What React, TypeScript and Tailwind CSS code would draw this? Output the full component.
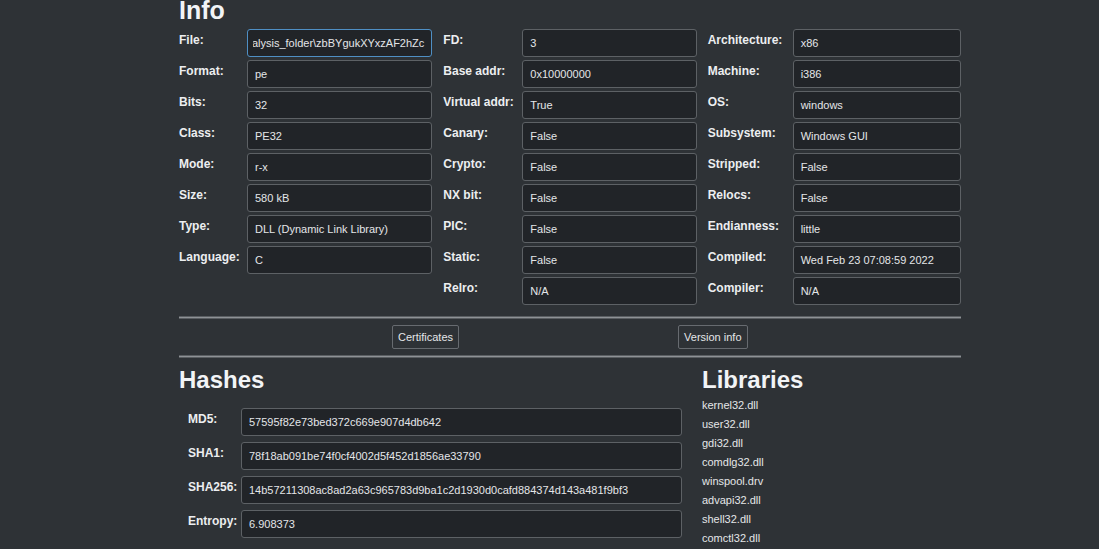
import React from 'react';

type Field = { label: string; value: string; focused?: boolean; scroll?: boolean };

const col1: Field[] = [
  { label: 'File:', value: 'C:\\Users\\user\\Desktop\\analysis_folder\\zbBYgukXYxzAF2hZc', focused: true, scroll: true },
  { label: 'Format:', value: 'pe' },
  { label: 'Bits:', value: '32' },
  { label: 'Class:', value: 'PE32' },
  { label: 'Mode:', value: 'r-x' },
  { label: 'Size:', value: '580 kB' },
  { label: 'Type:', value: 'DLL (Dynamic Link Library)' },
  { label: 'Language:', value: 'C' },
];

const col2: Field[] = [
  { label: 'FD:', value: '3' },
  { label: 'Base addr:', value: '0x10000000' },
  { label: 'Virtual addr:', value: 'True' },
  { label: 'Canary:', value: 'False' },
  { label: 'Crypto:', value: 'False' },
  { label: 'NX bit:', value: 'False' },
  { label: 'PIC:', value: 'False' },
  { label: 'Static:', value: 'False' },
  { label: 'Relro:', value: 'N/A' },
];

const col3: Field[] = [
  { label: 'Architecture:', value: 'x86' },
  { label: 'Machine:', value: 'i386' },
  { label: 'OS:', value: 'windows' },
  { label: 'Subsystem:', value: 'Windows GUI' },
  { label: 'Stripped:', value: 'False' },
  { label: 'Relocs:', value: 'False' },
  { label: 'Endianness:', value: 'little' },
  { label: 'Compiled:', value: 'Wed Feb 23 07:08:59 2022' },
  { label: 'Compiler:', value: 'N/A' },
];

const hashes: Field[] = [
  { label: 'MD5:', value: '57595f82e73bed372c669e907d4db642' },
  { label: 'SHA1:', value: '78f18ab091be74f0cf4002d5f452d1856ae33790' },
  { label: 'SHA256:', value: '14b57211308ac8ad2a63c965783d9ba1c2d1930d0cafd884374d143a481f9bf3' },
  { label: 'Entropy:', value: '6.908373' },
];

const libraries = [
  'kernel32.dll',
  'user32.dll',
  'gdi32.dll',
  'comdlg32.dll',
  'winspool.drv',
  'advapi32.dll',
  'shell32.dll',
  'comctl32.dll',
];

const ValueBox: React.FC<{ field: Field; className: string }> = ({ field, className }) => (
  <div
    className={`h-[28px] min-w-0 overflow-hidden rounded-[3px] border bg-[#212428] flex items-center text-[11px] text-[#e4e6e8] ${
      field.focused ? 'border-[#4f8fc4]' : 'border-[#5d6165]'
    } ${className}`}
  >
    {field.scroll ? (
      <div className="flex-1 min-w-0 mx-[5px] overflow-hidden flex justify-end whitespace-nowrap pr-[2px]">
        <span className="shrink-0">{field.value}</span>
      </div>
    ) : (
      <span className="pl-[7px] whitespace-nowrap">{field.value}</span>
    )}
  </div>
);

const InfoColumn: React.FC<{ fields: Field[]; labelW: string }> = ({ fields, labelW }) => (
  <div className="flex flex-col gap-[3px] min-w-0">
    {fields.map((f) => (
      <div key={f.label} className="flex">
        <div className={`${labelW} shrink-0 pt-[3px] text-[12px] leading-[16px] font-bold text-[#eceef0]`}>
          {f.label}
        </div>
        <ValueBox field={f} className="flex-1" />
      </div>
    ))}
  </div>
);

const Separator = () => (
  <div className="h-[3px] border-y border-[#5a5e62] bg-[#8e9296]" />
);

const Button: React.FC<{ children: React.ReactNode; className?: string }> = ({ children, className }) => (
  <button
    className={`h-[24px] px-[5px] rounded-[2px] border border-[#676b70] bg-[#2e3236] text-[11px] text-[#e4e6e8] ${className ?? ''}`}
  >
    {children}
  </button>
);

export default function App() {
  return (
    <div
      className="w-[1099px] h-[549px] overflow-hidden bg-[#2e3236] text-[#eceef0]"
      style={{ fontFamily: '"Liberation Sans", Arial, sans-serif' }}
    >
      <div className="ml-[179px] w-[782px]">
        <h1 className="h-[21px] text-[25px] leading-[21px] font-bold text-[#f2f4f6]">Info</h1>

        <div className="mt-[8px] grid grid-cols-3 gap-x-[11px]">
          <InfoColumn fields={col1} labelW="w-[68px]" />
          <InfoColumn fields={col2} labelW="w-[79px]" />
          <InfoColumn fields={col3} labelW="w-[85px]" />
        </div>

        <div className="mt-[11px]">
          <Separator />
        </div>

        <div className="mt-[6px] flex">
          <Button className="ml-[213px]">Certificates</Button>
          <Button className="ml-[219px]">Version info</Button>
        </div>

        <div className="mt-[6px]">
          <Separator />
        </div>

        <div className="mt-[10px] flex">
          <div className="w-[523px] shrink-0">
            <h2 className="h-[24px] text-[24px] leading-[24px] font-bold text-[#f2f4f6]">Hashes</h2>
            <div className="mt-[16px] flex flex-col gap-[6px]">
              {hashes.map((h) => (
                <div key={h.label} className="flex">
                  <div className="w-[62px] shrink-0 pl-[9px] pt-[3px] text-[12px] leading-[16px] font-bold text-[#eceef0]">
                    {h.label}
                  </div>
                  <ValueBox field={h} className="w-[441px]" />
                </div>
              ))}
            </div>
          </div>
          <div>
            <h2 className="h-[24px] text-[24px] leading-[24px] font-bold text-[#f2f4f6]">Libraries</h2>
            <ul className="mt-[4px]">
              {libraries.map((lib) => (
                <li key={lib} className="text-[11px] leading-[19px] text-[#e4e6e8]">
                  {lib}
                </li>
              ))}
            </ul>
          </div>
        </div>
      </div>
    </div>
  );
}
